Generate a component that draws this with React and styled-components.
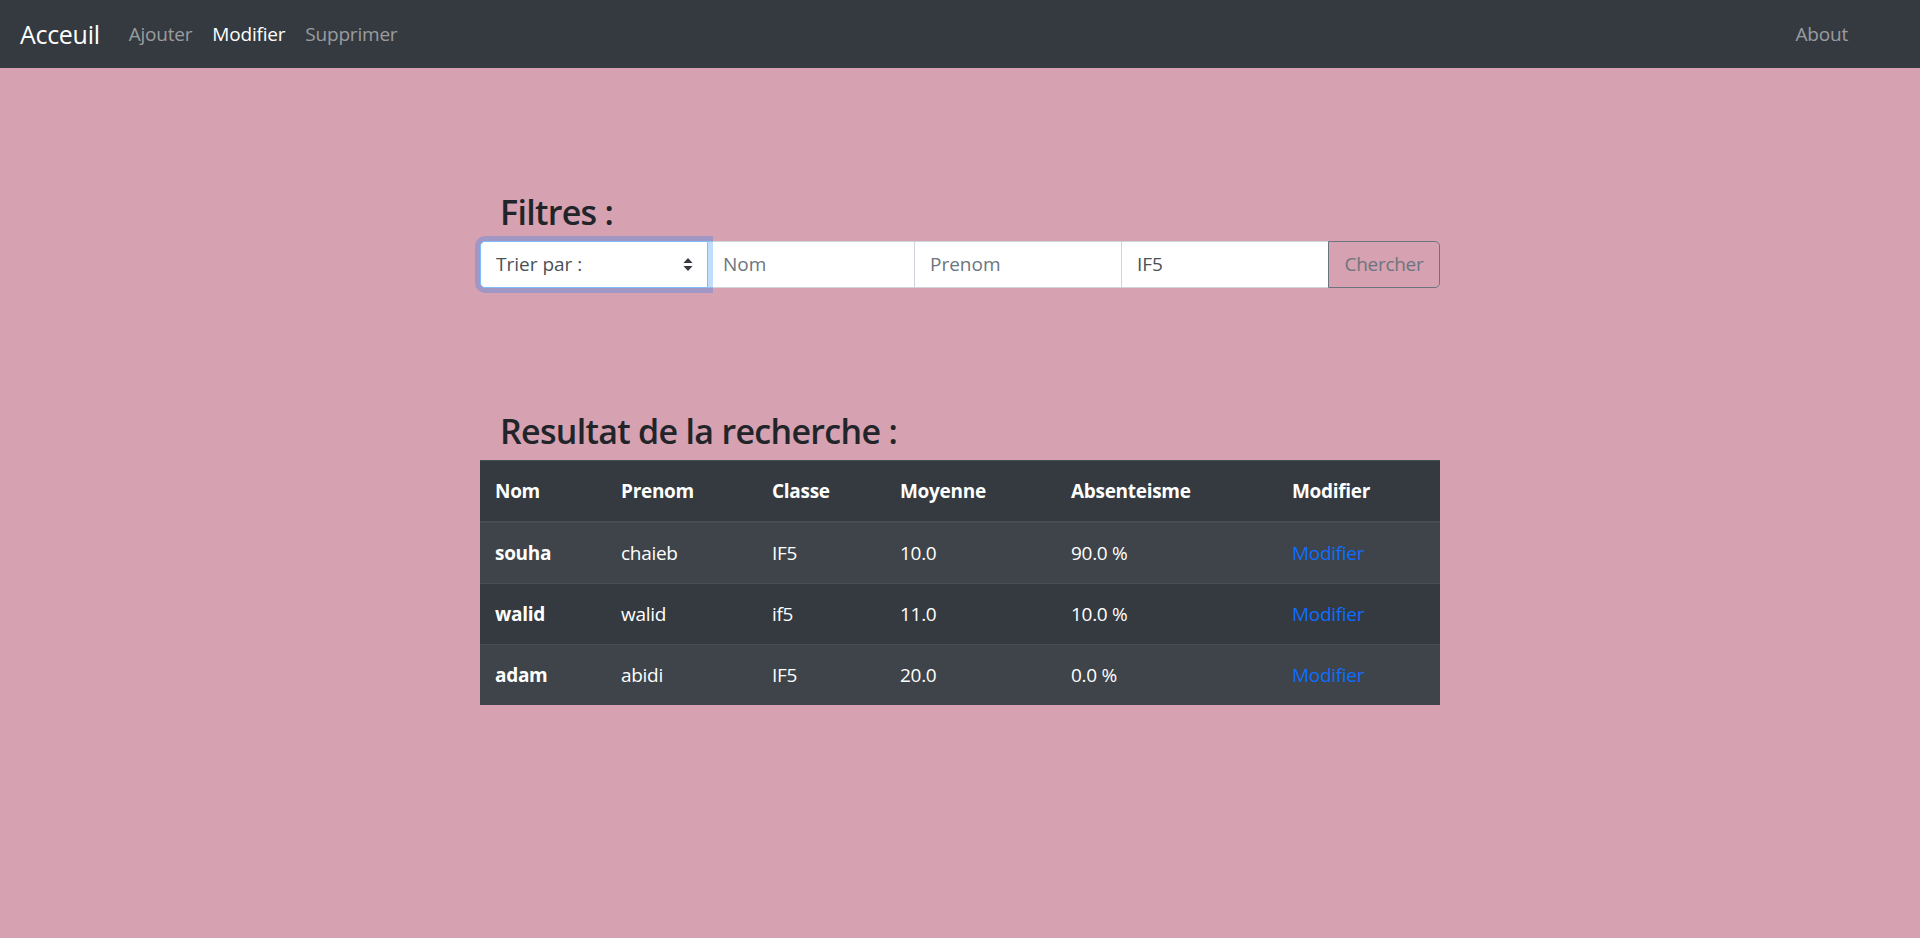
import styled, { createGlobalStyle } from 'styled-components';

const GlobalStyle = createGlobalStyle`
  html, body {
    margin: 0;
    padding: 0;
    background: #d6a1b1;
    font-family: "Open Sans", "Noto Sans", sans-serif;
    font-size: 20px;
    color: #212529;
  }
`;

const Page = styled.div`
  min-height: 938px;
  background: #d6a1b1;
`;

const Navbar = styled.nav`
  display: flex;
  align-items: center;
  height: 68px;
  padding: 0 20px;
  background: #343a40;
  box-sizing: border-box;
`;

const Brand = styled.a`
  font-size: 25px;
  color: #fff;
  margin-right: 19px;
  text-decoration: none;
  letter-spacing: -0.3px;
`;

const NavList = styled.div`
  display: flex;
  align-items: center;
  flex: 1;
`;

const NavLink = styled.a`
  padding: 0 10px;
  font-size: 19px;
  letter-spacing: -0.2px;
  color: ${p => (p.$active ? '#fff' : 'rgba(255, 255, 255, 0.5)')};
  text-decoration: none;
`;

const RightLinks = styled.div`
  display: flex;
  margin-right: 42px;
`;

const Main = styled.main`
  width: 960px;
  margin: 0 auto;
  padding-top: 124px;
`;

const Heading = styled.h3`
  margin: 0 0 8px;
  padding-left: 20px;
  font-size: 34px;
  font-weight: 600;
  line-height: 1.2;
  letter-spacing: -0.7px;
  color: #212529;
`;

const InputGroup = styled.div`
  display: flex;
  height: 47px;
`;

const SelectBox = styled.div`
  position: relative;
  flex: 0 0 228px;
  display: flex;
  align-items: center;
  justify-content: space-between;
  box-sizing: border-box;
  padding: 0 14px 0 15px;
  background: #fff;
  border: 1px solid #80bdff;
  border-radius: 5px 0 0 5px;
  box-shadow: 0 0 0 5px rgba(0, 123, 255, 0.25);
  color: #495057;
  font-size: 19px;
  z-index: 2;
`;

const Field = styled.div`
  flex: 1 1 0;
  display: flex;
  align-items: center;
  box-sizing: border-box;
  padding: 0 15px;
  margin-left: -1px;
  background: #fff;
  border: 1px solid #ced4da;
  font-size: 19px;
  color: ${p => (p.$placeholder ? '#6c757d' : '#495057')};
`;

const SearchButton = styled.button`
  flex: 0 0 112px;
  margin-left: -1px;
  background: transparent;
  border: 1px solid #6c757d;
  border-radius: 0 5px 5px 0;
  color: #6c757d;
  font-family: inherit;
  font-size: 19px;
  letter-spacing: -0.3px;
  padding: 0;
`;

const ResultSection = styled.section`
  margin-top: 123px;
`;

const Table = styled.table`
  width: 960px;
  border-collapse: collapse;
  table-layout: fixed;
  color: #fff;
  background: #343a40;
  font-size: 19px;
`;

const Th = styled.th`
  height: 60px;
  padding: 0 15px;
  text-align: left;
  font-weight: 700;
  letter-spacing: -0.3px;
  border-top: 1px solid #454d55;
  border-bottom: ${p => (p.$head ? '2px' : '0')} solid #454d55;
`;

const Td = styled.td`
  height: 60px;
  padding: 0 15px;
  letter-spacing: -0.3px;
  border-top: 1px solid #454d55;
`;

const Row = styled.tr`
  background: ${p => (p.$striped ? 'rgba(255, 255, 255, 0.05)' : 'transparent')};
`;

const EditLink = styled.a`
  color: #0d6efd;
  text-decoration: none;
`;

const columns = [126, 151, 128, 171, 221, 163];

const students = [
  { nom: 'souha', prenom: 'chaieb', classe: 'IF5', moyenne: '10.0', abs: '90.0 %' },
  { nom: 'walid', prenom: 'walid', classe: 'if5', moyenne: '11.0', abs: '10.0 %' },
  { nom: 'adam', prenom: 'abidi', classe: 'IF5', moyenne: '20.0', abs: '0.0 %' },
];

const SortArrows = () => (
  <svg width="10" height="13" viewBox="0 0 10 13" aria-hidden="true">
    <path d="M5 0L9.5 5H0.5z" fill="#343a40" />
    <path d="M5 13L9.5 8H0.5z" fill="#343a40" />
  </svg>
);

export default function App() {
  return (
    <Page>
      <GlobalStyle />
      <Navbar>
        <Brand href="#">Acceuil</Brand>
        <NavList>
          <NavLink href="#">Ajouter</NavLink>
          <NavLink href="#" $active>Modifier</NavLink>
          <NavLink href="#">Supprimer</NavLink>
        </NavList>
        <RightLinks>
          <NavLink href="#">About</NavLink>
        </RightLinks>
      </Navbar>

      <Main>
        <Heading>Filtres :</Heading>
        <InputGroup>
          <SelectBox>
            <span>Trier par :</span>
            <SortArrows />
          </SelectBox>
          <Field $placeholder>Nom</Field>
          <Field $placeholder>Prenom</Field>
          <Field>IF5</Field>
          <SearchButton>Chercher</SearchButton>
        </InputGroup>

        <ResultSection>
          <Heading>Resultat de la recherche :</Heading>
          <Table>
            <colgroup>
              {columns.map((w, i) => <col key={i} style={{ width: w }} />)}
            </colgroup>
            <thead>
              <tr>
                <Th $head>Nom</Th>
                <Th $head>Prenom</Th>
                <Th $head>Classe</Th>
                <Th $head>Moyenne</Th>
                <Th $head>Absenteisme</Th>
                <Th $head>Modifier</Th>
              </tr>
            </thead>
            <tbody>
              {students.map((s, i) => (
                <Row key={s.nom} $striped={i % 2 === 0}>
                  <Th>{s.nom}</Th>
                  <Td>{s.prenom}</Td>
                  <Td>{s.classe}</Td>
                  <Td>{s.moyenne}</Td>
                  <Td>{s.abs}</Td>
                  <Td><EditLink href="#">Modifier</EditLink></Td>
                </Row>
              ))}
            </tbody>
          </Table>
        </ResultSection>
      </Main>
    </Page>
  );
}
